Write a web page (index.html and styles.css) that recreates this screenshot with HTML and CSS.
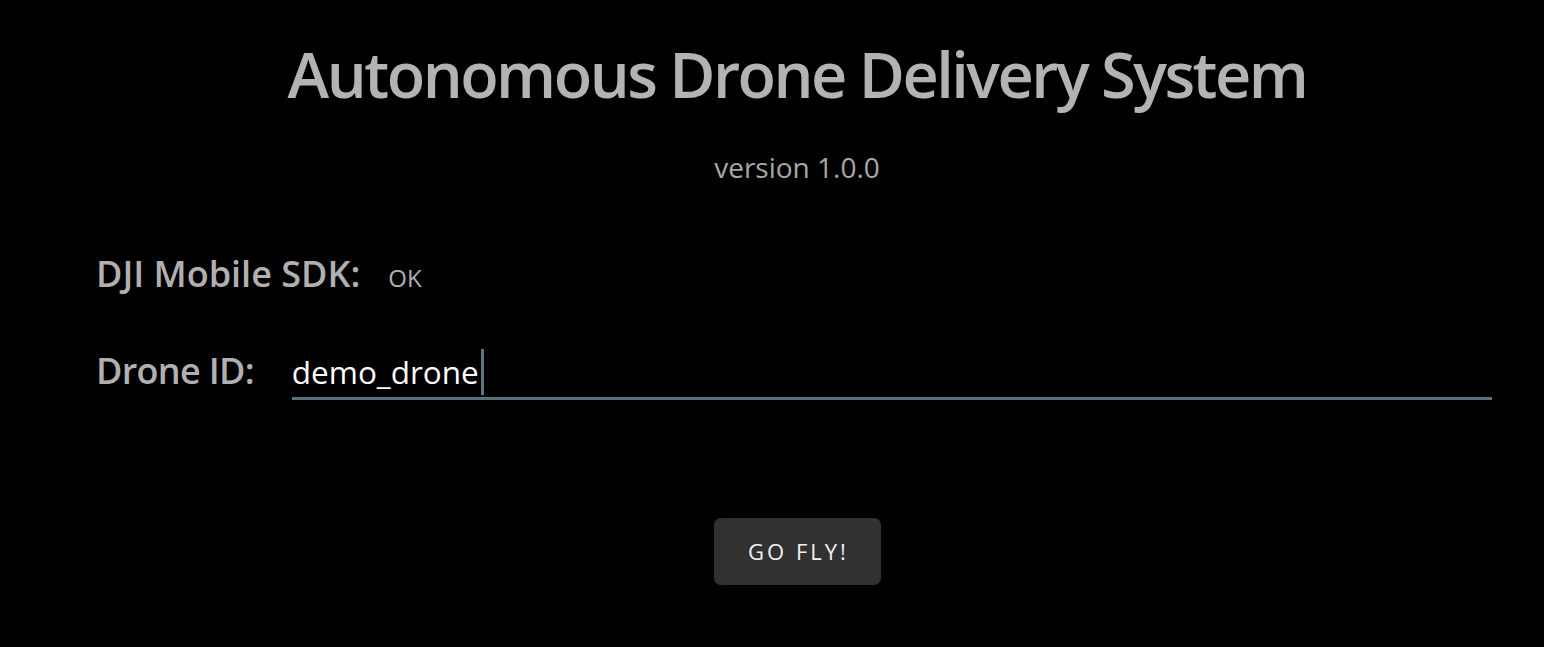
FILE: index.html
```html
<!DOCTYPE html>
<html>
<head>
<meta charset="utf-8">
<link rel="stylesheet" href="styles.css">
</head>
<body>
<div class="page">
  <h1 class="title">Autonomous Drone Delivery System</h1>
  <div class="version">version 1.0.0</div>
  <div class="form">
    <div class="row sdk-row">
      <span class="label">DJI Mobile SDK:</span>
      <span class="status">OK</span>
    </div>
    <div class="row id-row">
      <span class="label">Drone ID:</span>
      <div class="field"><span class="value">demo_drone</span><span class="caret"></span></div>
    </div>
  </div>
  <div class="actions">
    <button class="go">GO FLY!</button>
  </div>
</div>
</body>
</html>
```
FILE: styles.css
```css
html, body {
  margin: 0;
  background: #000;
  height: 100%;
}
body {
  font-family: "Open Sans", "Noto Sans", sans-serif;
  color: #b3b3b3;
}
.page {
  padding-left: 50px;
  display: flex;
  flex-direction: column;
}
.title {
  margin: 34px 0 0;
  text-align: center;
  font-size: 63px;
  font-weight: 600;
  line-height: 80px;
  color: #b3b3b3;
  letter-spacing: -2.5px;
}
.version {
  margin-top: 35px;
  text-align: center;
  font-size: 28px;
  line-height: 36px;
  color: #a8a8a8;
}
.form {
  padding: 0 52px 0 46px;
  margin-top: 64px;
  display: flex;
  flex-direction: column;
}
.row {
  display: flex;
  align-items: baseline;
}
.label {
  font-size: 36px;
  font-weight: 600;
  color: #b0b0b0;
}
.id-row .label {
  letter-spacing: -0.7px;
}
.sdk-row .status {
  margin-left: 28px;
  font-size: 24px;
  color: #b0b0b0;
}
.id-row {
  margin-top: 48px;
}
.field {
  margin-left: 38px;
  flex: 1;
  border-bottom: 3px solid #5a6e78;
  display: flex;
  align-items: center;
  padding-bottom: 2px;
}
.value {
  font-size: 31.5px;
  color: #fff;
}
.caret {
  width: 3px;
  height: 46px;
  background: #5f7480;
  margin-left: 2px;
}
.actions {
  display: flex;
  justify-content: center;
  margin-top: 118px;
}
.go {
  width: 167px;
  height: 67px;
  border: none;
  border-radius: 7px;
  background: #313131;
  color: #f2f2f2;
  font-family: "Open Sans", "Noto Sans", sans-serif;
  font-size: 22px;
  letter-spacing: 3px;
  padding: 0 0 0 3px;
}
```
